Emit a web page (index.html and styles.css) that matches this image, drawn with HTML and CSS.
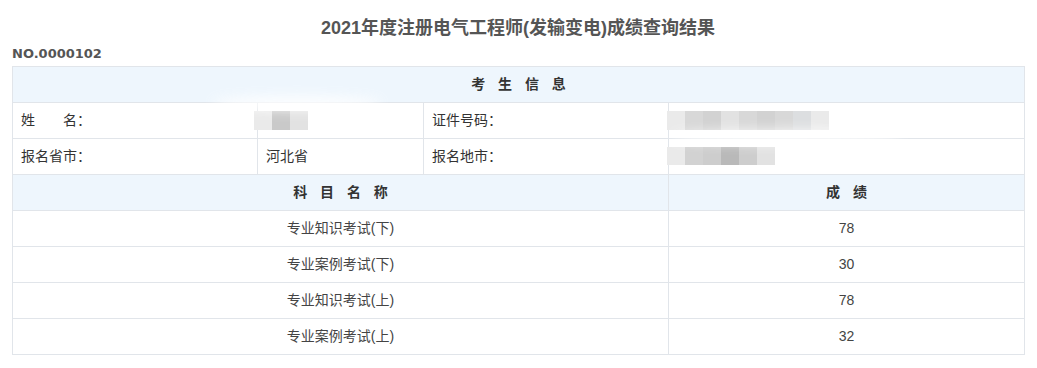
FILE: index.html
```html
<!DOCTYPE html>
<html lang="zh-CN">
<head>
<meta charset="utf-8">
<title>成绩查询结果</title>
<link rel="stylesheet" href="styles.css">
</head>
<body>
<div class="page">
  <h1 class="title">2021年度注册电气工程师(发输变电)成绩查询结果</h1>
  <div class="serial">NO.0000102</div>
  <div class="table-wrap">
    <table class="result">
      <colgroup>
        <col class="c1"><col class="c2"><col class="c3"><col class="c4">
      </colgroup>
      <tr class="head">
        <th colspan="4"><span class="spaced">考 生 信 息</span></th>
      </tr>
      <tr>
        <td>姓　　名：</td>
        <td><span class="mask mask-name"><i class="g1"></i><i class="g3"></i><i class="g2"></i></span></td>
        <td>证件号码：</td>
        <td><span class="mask mask-id"><i class="g1"></i><i class="g4"></i><i class="g5"></i><i class="g2"></i><i class="g4"></i><i class="g5"></i><i class="g4"></i><i class="g6"></i><i class="g1"></i></span></td>
      </tr>
      <tr>
        <td>报名省市：</td>
        <td>河北省</td>
        <td>报名地市：</td>
        <td><span class="mask mask-city"><i class="g1"></i><i class="g5"></i><i class="g7"></i><i class="g8"></i><i class="g7"></i><i class="g2"></i></span></td>
      </tr>
      <tr class="head">
        <th colspan="3"><span class="spaced">科 目 名 称</span></th>
        <th><span class="spaced">成 绩</span></th>
      </tr>
      <tr class="score">
        <td colspan="3">专业知识考试(下)</td>
        <td>78</td>
      </tr>
      <tr class="score">
        <td colspan="3">专业案例考试(下)</td>
        <td>30</td>
      </tr>
      <tr class="score">
        <td colspan="3">专业知识考试(上)</td>
        <td>78</td>
      </tr>
      <tr class="score">
        <td colspan="3">专业案例考试(上)</td>
        <td>32</td>
      </tr>
    </table>
    <div class="smear smear-a"></div>
    <div class="smear smear-b"></div>
  </div>
</div>
</body>
</html>
```

FILE: styles.css
```css
html, body {
  margin: 0;
  padding: 0;
  background: #ffffff;
}

.page {
  padding: 16px 13px 0 12px;
  font-family: "Liberation Sans", "Noto Sans CJK SC", sans-serif;
  color: #333333;
}

.title {
  margin: 0;
  font-size: 18px;
  line-height: 24px;
  font-weight: bold;
  text-align: center;
  color: #555555;
}

.serial {
  margin-top: 6px;
  font-family: "DejaVu Sans", sans-serif;
  font-size: 13px;
  line-height: 16px;
  font-weight: bold;
  color: #555555;
}

.table-wrap {
  position: relative;
  margin-top: 4px;
  width: 1012px;
}

.result {
  width: 1012px;
  border-collapse: collapse;
  table-layout: fixed;
  font-size: 14px;
}

.c1 { width: 245px; }
.c2 { width: 166px; }
.c3 { width: 245px; }
.c4 { width: 356px; }

.result td,
.result th {
  border: 1px solid #e1e5ea;
  padding: 0 8px;
  line-height: 35px;
  height: 35px;
  text-align: left;
  white-space: nowrap;
  overflow: visible;
}

.result tr.head th {
  background: #eef6fd;
  text-align: center;
  font-weight: bold;
  color: #333333;
}

.spaced {
  letter-spacing: 4.5px;
  margin-right: -4.5px;
}

.result tr.score td {
  text-align: center;
  color: #444444;
}

.mask {
  display: inline-flex;
  vertical-align: middle;
  height: 19px;
  position: relative;
  top: -1px;
}

.mask i {
  display: block;
  width: 18px;
  height: 19px;
}

.mask-name { margin-left: -12px; }
.mask-id { margin-left: -10px; }
.mask-city { margin-left: -10px; }
.mask-city i { height: 18px; }

.g1 { background: #eaeaea; }
.g2 { background: #e2e2e2; }
.g3 { background: #c9c9c9; }
.g4 { background: #d8d8d8; }
.g5 { background: #d2d2d2; }
.g6 { background: #dcdee0; }
.g7 { background: #cdcdcd; }
.g8 { background: #b9b9b9; }

.smear {
  position: absolute;
  background: #ffffff;
  border-radius: 50%;
  filter: blur(6px);
  opacity: 0.85;
  pointer-events: none;
}

.smear-a {
  left: 200px;
  top: 30px;
  width: 170px;
  height: 14px;
}

.smear-b {
  left: 660px;
  top: 64px;
  width: 230px;
  height: 14px;
}
```
